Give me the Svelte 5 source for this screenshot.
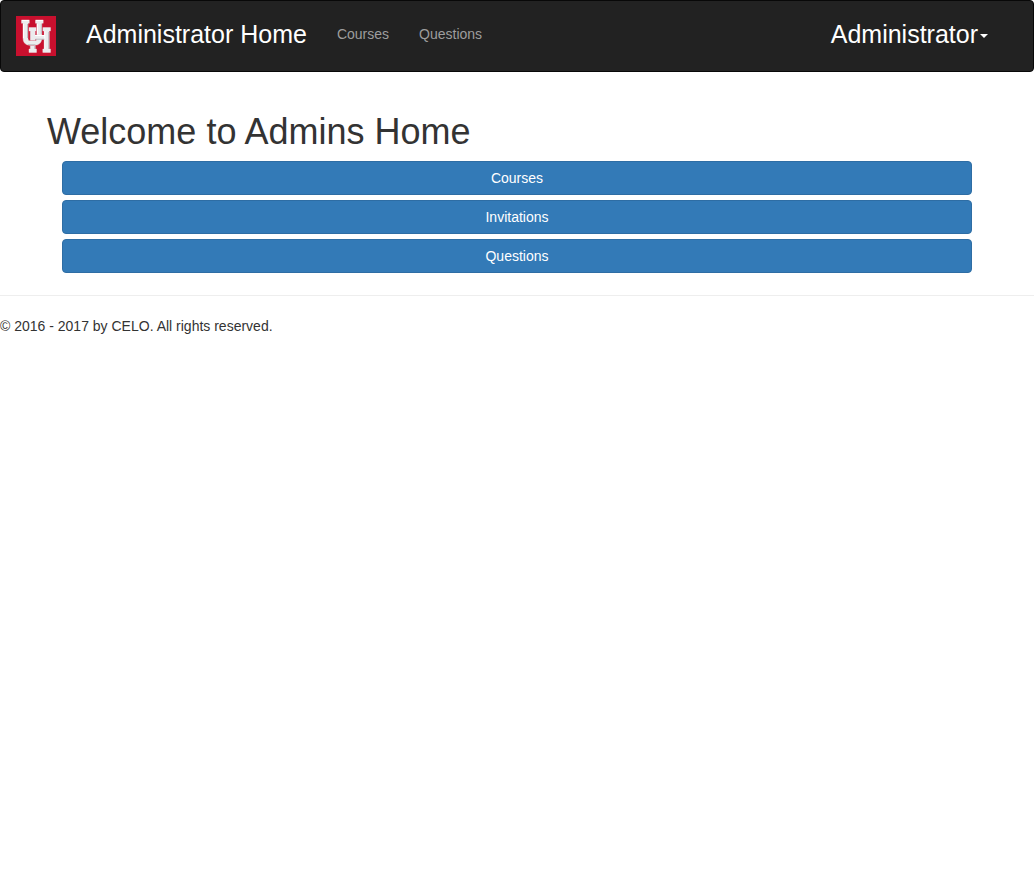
<script lang="ts">
  const links = ['Courses', 'Questions'];
  const actions = ['Courses', 'Invitations', 'Questions'];
</script>

<nav class="navbar">
  <a class="logo" href="#home" aria-label="Home">
    <svg viewBox="0 0 40 40" width="40" height="40" aria-hidden="true">
      <rect width="40" height="40" fill="#c8102e" />
      <!-- interlocking monogram: H stems, then the U, then the H crossbar on top -->
      <g fill="#ececee" stroke="#d9667a" stroke-width="1" paint-order="stroke" stroke-linejoin="round">
        <path d="M13 11.5H20.5V15H19.2V33H20.5V36.5H13V33H14.3V15H13Z" />
        <path d="M26.8 11.5H34.5V15H33.2V33H34.5V36.5H26.8V33H28.2V15H26.8Z" />
        <path d="M5.5 4H13.3V7.3H12V22.5Q12 25 14.5 25H18.3Q20.8 25 20.8 22.5V7.3H19.5V4H27.2V7.3H25.8V22Q25.8 29.2 18.5 29.2H14Q7 29.2 7 22V7.3H5.5Z" />
      </g>
      <path d="M18.5 19H29V23.2H18.5Z" fill="#ececee" />
      <path d="M6 4.5H12.8M20 4.5H26.8M7.6 8V22M21.5 8V18M28.8 15V33M19 19.5H29" fill="none" stroke="#fff" />
      <path d="M11.5 8V22M25.3 8V18M32.7 16V33M18.7 30V33M19.5 23.2H28.5M12 28.7H19.5" fill="none" stroke="#bebec3" />
    </svg>
  </a>
  <a class="brand" href="#home">Administrator Home</a>
  <div class="links">
    {#each links as link}
      <a href="#{link}">{link}</a>
    {/each}
  </div>
  <button class="user" type="button">Administrator<span class="caret"></span></button>
</nav>

<main>
  <h1>Welcome to Admins Home</h1>
  <div class="actions">
    {#each actions as action}
      <button class="btn" type="button">{action}</button>
    {/each}
  </div>
</main>

<footer>
  <p>© 2016 - 2017 by CELO. All rights reserved.</p>
</footer>

<style>
  :global(body) {
    margin: 0;
    background: #fff;
    color: #333;
    font: 14px/20px "Liberation Sans", Arial, sans-serif;
  }
  .navbar {
    display: flex;
    align-items: flex-start;
    box-sizing: border-box;
    min-height: 72px;
    padding: 0 30px 0 0;
    background: #222;
    border: 1px solid #080808;
    border-radius: 4px;
  }
  .navbar a { text-decoration: none; }
  .logo { padding: 15px; line-height: 0; }
  .brand { padding: 19px 15px 15px; color: #fff; font-size: 25px; line-height: 28px; }
  .links { display: flex; }
  .links a { padding: 23px 15px 15px; color: #9d9d9d; }
  .user {
    margin-left: auto;
    padding: 19px 15px 15px;
    border: 0;
    background: none;
    color: #fff;
    font: 25px/28px "Liberation Sans", Arial, sans-serif;
    cursor: pointer;
  }
  .caret {
    display: inline-block;
    margin-left: 2px;
    vertical-align: middle;
    border-top: 4px solid;
    border-right: 4px solid transparent;
    border-left: 4px solid transparent;
  }
  main { padding: 0 47px; }
  h1 { margin: 40px 0 10px; font-size: 36px; line-height: 39px; font-weight: 500; }
  .actions { display: grid; gap: 5px; padding: 0 15px; }
  .btn {
    padding: 6px 12px;
    border: 1px solid #2e6da4;
    border-radius: 4px;
    background: #337ab7;
    color: #fff;
    font: 14px/20px "Liberation Sans", Arial, sans-serif;
    cursor: pointer;
  }
  footer { margin-top: 22px; border-top: 1px solid #eee; }
  footer p { margin: 20px 0 10px; }
</style>
